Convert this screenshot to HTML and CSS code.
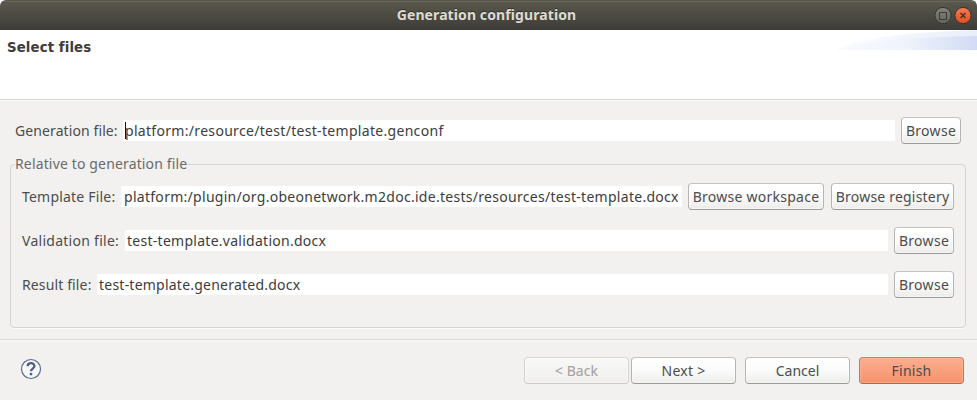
FILE: index.html
```html
<!DOCTYPE html>
<html lang="en">
<head>
<meta charset="utf-8">
<title>Generation configuration</title>
<link rel="stylesheet" href="styles.css">
</head>
<body>
<div class="window">
  <header class="titlebar">
    <span class="title">Generation configuration</span>
    <svg class="controls" width="40" height="20" viewBox="0 0 40 20">
      <defs>
        <linearGradient id="gray" x2="0" y2="1"><stop stop-color="#85847b"/><stop offset="1" stop-color="#65645c"/></linearGradient>
        <linearGradient id="red" x2="0" y2="1"><stop stop-color="#f37c58"/><stop offset="1" stop-color="#e44d1e"/></linearGradient>
      </defs>
      <circle cx="10" cy="9.5" r="8.1" fill="url(#gray)" stroke="#35342f"/>
      <rect x="6.5" y="6.5" width="7" height="7" fill="none" stroke="#3c3b37"/>
      <circle cx="30" cy="9.5" r="8.1" fill="url(#red)" stroke="#35342f"/>
      <path d="M27.5 7l5 5M32.5 7l-5 5" stroke="#4b2c1e" stroke-width="1.3"/>
    </svg>
  </header>
  <section class="banner">
    <h1>Select files</h1>
    <svg class="swoosh" width="142" height="20" viewBox="0 0 142 20">
      <defs>
        <linearGradient id="pale"><stop stop-color="#fcfdff"/><stop offset="1" stop-color="#e8eefa"/></linearGradient>
        <linearGradient id="blue"><stop stop-color="#f8faff"/><stop offset=".5" stop-color="#eff3fc"/><stop offset="1" stop-color="#d1dbf4"/></linearGradient>
      </defs>
      <path d="M1 20C22 7 82 2 142 0V20Z" fill="url(#pale)"/>
      <path d="M1 20C30 10 85 7 142 6V20Z" fill="url(#blue)"/>
    </svg>
  </section>
  <main class="content">
    <div class="row row-main">
      <label class="label l-generation"><span>Generation file:</span></label>
      <div class="field f-generation"><span>platform:/resource/test/test-template.genconf</span><i class="caret"></i></div>
      <button class="btn small"><span>Browse</span></button>
    </div>
    <fieldset class="group">
      <legend><span>Relative to generation file</span></legend>
      <div class="row">
        <label class="label l-template"><span>Template File:</span></label>
        <div class="field f-template"><span>platform:/plugin/org.obeonetwork.m2doc.ide.tests/resources/test-template.docx</span></div>
        <button class="btn workspace"><span>Browse workspace</span></button>
        <button class="btn registry"><span>Browse registery</span></button>
      </div>
      <div class="row">
        <label class="label l-validation"><span>Validation file:</span></label>
        <div class="field f-validation"><span>test-template.validation.docx</span></div>
        <button class="btn small"><span>Browse</span></button>
      </div>
      <div class="row">
        <label class="label l-result"><span>Result file:</span></label>
        <div class="field f-result"><span>test-template.generated.docx</span></div>
        <button class="btn small"><span>Browse</span></button>
      </div>
    </fieldset>
  </main>
  <footer class="footer">
    <svg class="help" width="22" height="22" viewBox="0 0 22 22">
      <circle cx="11" cy="11" r="9.5" fill="#f7f7f7" stroke="#5b6c8e" stroke-width="1.2"/>
      <path d="M7.7 8.2C7.7 4.2 14.4 4.3 14.4 8C14.4 10.5 11 10.6 11 13.3" fill="none" stroke="#4d5f86" stroke-width="2.3"/>
      <circle cx="11" cy="16.1" r="1.45" fill="#4d5f86"/>
    </svg>
    <button class="btn wide back" disabled><span>&lt; Back</span></button>
    <button class="btn wide next"><span>Next &gt;</span></button>
    <button class="btn wide cancel"><span>Cancel</span></button>
    <button class="btn wide finish"><span>Finish</span></button>
  </footer>
</div>
</body>
</html>
```
FILE: styles.css
```css
* { box-sizing: border-box; }
body {
  margin: 0;
  background: #fff;
  color: #4c4c4c;
  font: 14px/20px "Noto Sans", "Open Sans", sans-serif;
}
.window {
  display: flex;
  flex-direction: column;
  width: 977px;
  height: 400px;
  overflow: hidden;
  border-radius: 6px 6px 0 0;
  background: #f2f1f0;
}
.titlebar {
  display: grid;
  grid-template-columns: 1fr auto 1fr;
  align-items: center;
  height: 30px;
  padding-right: 4px;
  background: linear-gradient(#5b594d, #3d3c38);
  border-top: 1px solid #58574c;
  box-shadow: inset 0 1px #69675a;
}
.title {
  grid-column: 2;
  padding-bottom: 2px;
  color: #dfdbd2;
  font-weight: 700;
  font-size: 14px;
  letter-spacing: .1px;
  white-space: nowrap;
  text-shadow: 0 -1px #33322d;
}
.controls { justify-self: end; }
.banner {
  display: flex;
  justify-content: space-between;
  align-items: flex-start;
  height: 70px;
  padding-left: 7px;
  background: #fff;
  border-bottom: 1px solid #d8d8d8;
}
.banner h1 {
  margin: 8px 0 0;
  font: 700 13.33px/20px "DejaVu Sans", sans-serif;
  letter-spacing: .1px;
  color: #3c3c3c;
}
.swoosh { display: block; }
.content {
  height: 239px;
  padding: 17px 10px 0;
  border-top: 1px solid #f9f9f8;
}
.row {
  display: flex;
  align-items: center;
  height: 27px;
  white-space: nowrap;
}
.row + .row { margin-top: 17px; }
.row-main { padding: 0 6px 0 5px; margin-top: -1px; }
.label { flex: none; }
.l-generation { width: 108px; letter-spacing: .1px; }
.l-template { width: 99px; letter-spacing: .2px; }
.l-validation { width: 103px; letter-spacing: .27px; }
.l-result { width: 75px; letter-spacing: .13px; }
.field {
  position: relative;
  flex: 1;
  height: 21px;
  padding-left: 2px;
  margin-right: 6px;
  line-height: 21px;
  letter-spacing: .31px;
  background: #fff;
  color: #3c3c3c;
}
.f-template { padding-left: 3px; letter-spacing: .285px; }
.f-validation { letter-spacing: .27px; }
.f-result { letter-spacing: .23px; }
.caret {
  position: absolute;
  left: 2px;
  top: 2px;
  width: 1px;
  height: 17px;
  background: #111;
}
.group {
  height: 175px;
  margin: 9px 1px 0 0;
  padding: 8px 11px 0 11px;
  border: 1px solid #d5d4d2;
  border-radius: 4px;
  box-shadow: 0 1px #fafafa;
}
.group legend {
  margin-left: -7px;
  padding: 0;
  height: 22px;
  line-height: 22px;
  letter-spacing: .15px;
  color: #6b6b6b;
}
.btn {
  display: flex;
  flex: none;
  align-items: center;
  justify-content: center;
  height: 27px;
  padding: 0;
  border: 1px solid;
  border-color: #c3c2c0 #b5b4b2 #9b9a98;
  border-radius: 4px;
  background: linear-gradient(#fff, #fbfbfb 50%, #edeceb);
  box-shadow: inset 0 0 0 1px rgba(255, 255, 255, .5);
  color: #4c4c4c;
  font: inherit;
  white-space: nowrap;
}
.small { width: 60px; letter-spacing: .3px; }
.workspace { width: 136px; margin-right: 7px; letter-spacing: .25px; }
.registry { width: 123px; letter-spacing: .2px; }
.footer {
  display: flex;
  align-items: flex-start;
  height: 61px;
  padding: 17px 13px 0 20px;
  border-top: 1px solid #d8d7d5;
  box-shadow: inset 0 1px #fafafa;
}
.help { margin: 1px auto 0 0; }
.wide { width: 105px; }
.back {
  margin-right: 2px;
  border-color: #d9d8d6 #d3d2d0 #cbcac8;
  background: linear-gradient(#f8f8f7, #f0efee);
  color: #a0a09f;
}
.next { letter-spacing: .25px; }
.finish { letter-spacing: .25px; }
.next, .cancel { margin-right: 9px; }
.finish {
  border-color: #c98268 #b97a63 #a66c56;
  background: linear-gradient(#fcae91, #f6926c);
  box-shadow: inset 0 0 0 1px rgba(255, 190, 160, .45);
}
```
